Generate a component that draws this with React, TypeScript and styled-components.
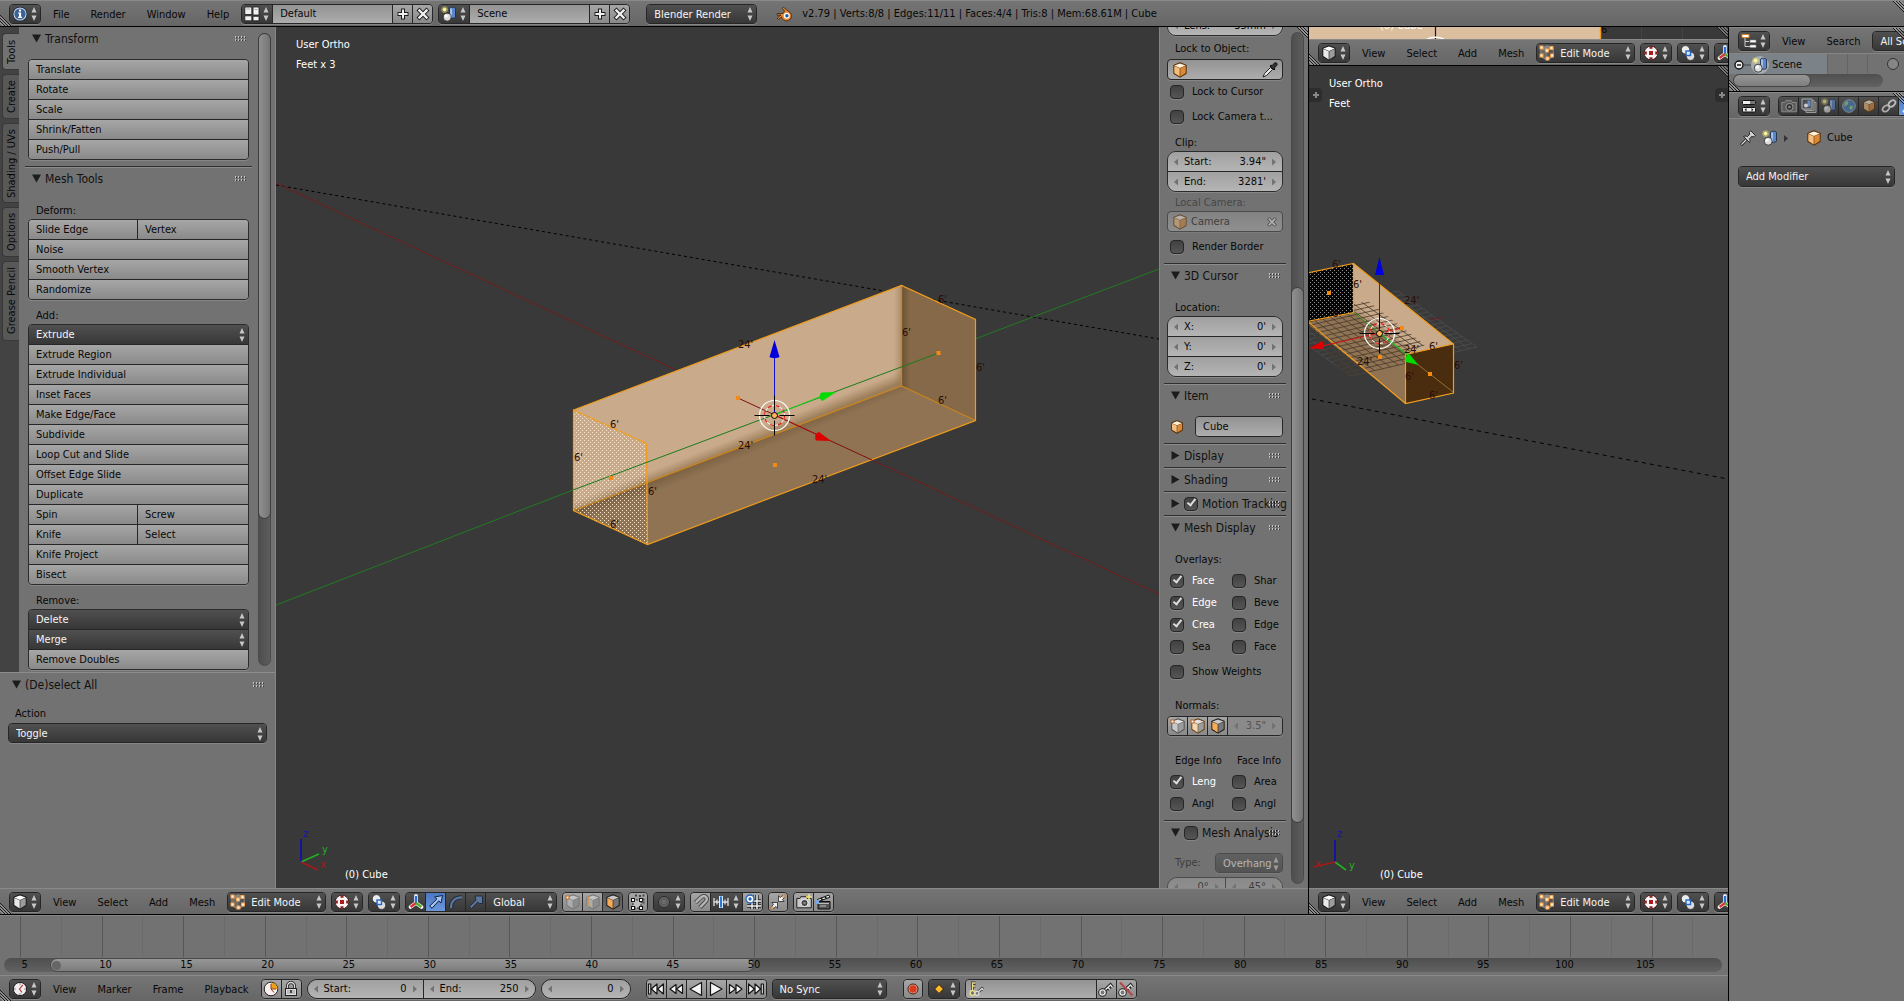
import React from 'react';
import styled, { createGlobalStyle, css } from 'styled-components';

const GlobalStyle = createGlobalStyle`
  *, *::before, *::after { box-sizing: border-box; }
  body {
    margin: 0;
    background: #727272;
    color: #080808;
    font: 11px/18px "DejaVu Sans Condensed", "DejaVu Sans", sans-serif;
    overflow: hidden;
  }
  button, input, select { font: inherit; color: inherit; margin: 0; padding: 0; border: 0; border-radius: 0; background: none; outline: none; }
  select { appearance: none; }
  svg { display: block; flex: none; }
`;

/* ---------- surfaces ---------- */

const light = css`background: linear-gradient(#a6a6a6, #8a8a8a);`;
const dark = css`background: linear-gradient(#505050, #373737); color: #f4f4f4;`;
const field = css`background: linear-gradient(#939393, #adadad);`;
const num = css`background: linear-gradient(#a0a0a0, #b5b5b5);`;

/* ---------- icons ---------- */

type IconProps = { s?: number; children?: React.ReactNode };
const Ico = ({ s = 16, children }: IconProps) => (
  <svg width={s} height={s} viewBox="0 0 16 16" aria-hidden="true">{children}</svg>
);

const InfoIcon = () => (
  <Ico><circle cx="8" cy="8" r="7.3" fill="#15243c" /><circle cx="8" cy="8" r="6.6" fill="#c9d8ec" /><circle cx="8" cy="8" r="5.6" fill="#3c6296" />
    <path d="M6.3 6.6h2.8v4.2h1v1.2H6v-1.2h1V7.8h-.7zM7 3.6h2v2H7z" fill="#fff" /></Ico>
);
const LayoutIcon = () => (
  <Ico><path d="M.8 1h7v7.500h-7zM9 1h6v8H9zM.8 9.800h7v5h-7zM9 10.300h6v4.500H9z" fill="#f0f0f0" stroke="#1a1a1a" strokeWidth=".8" /><path d="M2.500 3h3.500M10.500 3.500h3" stroke="#aaa" /></Ico>
);
const SceneIcon = () => (
  <Ico>
    <circle cx="3.6" cy="3.6" r="3.4" fill="#e8e070" opacity=".45" /><circle cx="3.6" cy="3.6" r="1.8" fill="#fbf6a0" />
    <path d="M8.5 2.6c0-1.8 6-1.8 6 0v8.3c0 1.8-6 1.8-6 0z" fill="#5b86cc" stroke="#15243c" strokeWidth=".8" /><path d="M10 2.5v8.5" stroke="#b9cff0" strokeWidth="1.6" />
    <circle cx="6.2" cy="11.2" r="4" fill="#dcdcdc" stroke="#222" strokeWidth=".8" /><circle cx="5.2" cy="10" r="1.6" fill="#fff" />
  </Ico>
);
const PlusIcon = () => (
  <Ico><path d="M8 2.5v11M2.5 8h11" stroke="#1c1c1c" strokeWidth="4" /><path d="M8 3.4v9.2M3.4 8h9.2" stroke="#f0f0f0" strokeWidth="2" /></Ico>
);
const CrossIcon = ({ s }: IconProps) => (
  <Ico s={s}><path d="M3 3l10 10M13 3L3 13" stroke="#1c1c1c" strokeWidth="4.2" /><path d="M3.6 3.6l8.8 8.8M12.4 3.6l-8.8 8.8" stroke="#f0f0f0" strokeWidth="2.2" /></Ico>
);
const BlenderIcon = () => (
  <Ico><path d="M6 2.2l1.4-.9 7 5.4a5 5 0 0 1-3.4 8.2c-3 .2-5-1.500-5.300-4L2.600 13.300 1 12.300l4-3.200H1.200V7.500H7L8.600 5z" fill="#e8832a" stroke="#3a2410" strokeWidth=".8" /><circle cx="10.700" cy="9.700" r="3" fill="#fff" /><circle cx="10.900" cy="9.700" r="1.700" fill="#28588f" /></Ico>
);
type CubeProps = IconProps & { t: string; l: string; r: string; e?: string };
const Cube = ({ s, t, l, r, e = '#3a3a3a', children }: CubeProps) => (
  <Ico s={s}>
    <path d="M8 1l6 2.300v8L8 15l-6-3.700v-8z" fill={e} stroke={e} strokeWidth="1.400" strokeLinejoin="round" />
    <path d="M8 1.400l5.700 2.200L8 6 2.300 3.600z" fill={t} /><path d="M2.300 3.900L7.700 6.200v8.200l-5.400-3.300z" fill={l} /><path d="M13.700 3.900L8.300 6.200v8.200l5.400-3.300z" fill={r} />
    {children}
  </Ico>
);
const ViewIcon = () => <Cube t="#ffffff" l="#e9e9e9" r="#9b9b9b" e="#1d1d1d" />;
const ObjectIcon = ({ s }: IconProps) => <Cube s={s} t="#fff1da" l="#f3bd7d" r="#dc8a38" e="#5b3208" />;
const dot = (x: number, y: number, c = '#f5a04a') => <rect key={`${x}-${y}`} x={x} y={y} width="3" height="3" fill="#fff4e0" stroke={c} strokeWidth="1" />;
const EditIcon = () => (
  <Cube t="#8a8478" l="#6e6a63" r="#555" e="#888">{[dot(1, 1), dot(11, 1.5), dot(6.500, 4), dot(1, 9), dot(7, 12), dot(11.500, 9)]}</Cube>
);
const VertexIcon = () => <Cube t="#c4c4c4" l="#adadad" r="#8c8c8c" e="#777">{dot(1, 2, '#b8692a')}</Cube>;
const EdgeIcon = () => <Cube t="#c4c4c4" l="#adadad" r="#8c8c8c" e="#777"><path d="M3 2.500v10" stroke="#c9955f" strokeWidth="2" /></Cube>;
const FaceIcon = () => <Cube t="#c9c9c9" l="#f8ac58" r="#777" e="#26201a" />;
const NVertexIcon = () => <Cube t="#e2e2e2" l="#c9c9c9" r="#9c9c9c" e="#555">{dot(1, 2, '#b8692a')}</Cube>;
const NSplitIcon = () => <Cube t="#e2e2e2" l="#f2d8ae" r="#9c9c9c" e="#6a431a">{dot(1, 2, '#b8692a')}</Cube>;
const ShadeIcon = () => (
  <Ico>
    <circle cx="8" cy="8" r="6.800" fill="#fdf6f6" stroke="#2a0808" strokeWidth=".8" />
    <path d="M6.500 1.600h3v2.200h-3zM6.500 12.200h3v2.200h-3zM1.600 6.500h2.200v3H1.600zM12.200 6.500h2.200v3h-2.200z" fill="#8c2020" />
    <path d="M6 6h4v4H6z" fill="#b01c1c" />
  </Ico>
);
const PivotIcon = () => (
  <Ico><circle cx="5.500" cy="4.800" r="4.200" fill="#ececec" stroke="#222" strokeWidth=".7" /><circle cx="10.500" cy="11.200" r="4.200" fill="#dcdcdc" stroke="#222" strokeWidth=".7" /><rect x="6" y="6" width="4.500" height="4.500" fill="#dceaff" stroke="#2767c2" strokeWidth="1.400" /></Ico>
);
const AxesIcon = () => (
  <Ico><path d="M8 9V2" stroke="#dfe9ff" strokeWidth="4" strokeLinecap="round" /><path d="M8 9l-5.500 4" stroke="#fff" strokeWidth="3.600" strokeLinecap="round" /><path d="M8 9l5.500 4" stroke="#fff" strokeWidth="3.600" strokeLinecap="round" /><path d="M8 9V2" stroke="#2b6fd6" strokeWidth="2.400" /><path d="M8 9l-5.500 4" stroke="#d63434" strokeWidth="2.400" /><path d="M8 9l5.500 4" stroke="#4fae28" strokeWidth="2.400" /></Ico>
);
const MoveIcon = () => <Ico><path d="M14.500 1.500L13 9l-2.300-2.200L4 14.300 1.700 12l7.200-7L6.600 3z" fill="#a5c4ef" stroke="#10213f" strokeLinejoin="round" /></Ico>;
const ArcIcon = () => <Ico><path d="M3 14C3 7 7 3.300 14 3.300" fill="none" stroke="#1c2c44" strokeWidth="4" /><path d="M3 14C3 7 7 3.300 14 3.300" fill="none" stroke="#5c7599" strokeWidth="2.200" /></Ico>;
const ScaleIcon = () => <Ico><path d="M7 2h7.500v7.500h-3L9.700 8.200 3.500 14.500 1.600 12.600 7.900 6.300z" fill="#5c7599" stroke="#1c2c44" /></Ico>;
const LimitIcon = () => (
  <Ico><path d="M3 6h8v8H3z" fill="#bdbdbd" stroke="#222" strokeDasharray="2 1" />{[[1, 4], [9, 4], [1, 12], [9, 12]].map(([x, y]) => <rect key={`${x}${y}`} x={x + .5} y={y + .5} width="3" height="3" fill="#fff" stroke="#111" />)}<path d="M5 1.500h2M12.500 1.500h2M12.500 8.500h2M9 2h2M13.500 4.500v2" stroke="#444" strokeWidth="2" /></Ico>
);
const PropIcon = () => <Ico><circle cx="8" cy="8" r="5.500" fill="#6b6b6b" stroke="#2a2a2a" /><circle cx="8" cy="8" r="3.200" fill="none" stroke="#505050" /></Ico>;
const MagnetIcon = () => <Ico><path d="M2.500 8.500L8.500 3c4-2.600 7 1.500 4 4.700L7 13.500" fill="none" stroke="#4a4a4a" strokeWidth="4.400" /><path d="M2.700 8.300L8.500 3c4-2.600 7 1.500 4 4.700L7.200 13.300" fill="none" stroke="#b5b5b5" strokeWidth="2.400" /></Ico>;
const SnapIcon = () => <Ico><path d="M1 4v8M4 5.500v5M12 5.500v5M15 4v8M1 8h14" stroke="#ddd" strokeWidth="1.300" /><path d="M8 2v12" stroke="#d7e8ff" strokeWidth="4" /><path d="M8 2.500v11" stroke="#2b78d6" strokeWidth="2" /></Ico>;
const GridSnapIcon = () => <Ico><path d="M7 1v14M12 1v14M2 7h14M2 12h14" stroke="#222" strokeWidth="3.400" /><path d="M7 1v14M12 1v14M2 7h14M2 12h14" stroke="#eee" strokeWidth="1.500" /><circle cx="5" cy="5" r="4" fill="#fff" stroke="#2868b4" strokeWidth="1.300" /><circle cx="5" cy="5" r="1.700" fill="#2868b4" /></Ico>;
const MergeIcon = () => <Ico><path d="M8.500 7.500V1.800l1.800 1.700L13 1l2 2-2.600 2.600 1.800 1.900z" fill="#f2f2f2" stroke="#222" strokeWidth=".8" /><path d="M7.500 8.500v5.700l-1.800-1.700L3 15l-2-2 2.600-2.600-1.800-1.900z" fill="#f2f2f2" stroke="#222" strokeWidth=".8" /><path d="M12.800 1h2.200v2.200h-2.200zM1 12.800h2.200V15H1z" fill="#f7d9b0" stroke="#b8692a" strokeWidth=".8" /></Ico>;
const CameraIcon = ({ dim }: { dim?: boolean }) => <Ico><path d="M.8 4.500h3l1-1.800h5.500l1 1.800h4v9.300H.8z" fill={dim ? '#5c5c5c' : '#c9c9c9'} stroke={dim ? '#8a8a8a' : '#222'} /><circle cx="8.500" cy="9" r="3.600" fill={dim ? '#333' : '#444'} stroke={dim ? '#999' : '#eee'} /><circle cx="8.500" cy="9" r="1.300" fill="#888" />{!dim && <path d="M13 0v6M10 3h6" stroke="#f4e27a" strokeWidth="1.600" />}</Ico>;
const ClapIcon = () => <Ico><path d="M2 7.500h12V15H2z" fill="#555" stroke="#111" /><path d="M1.500 5.500L13 1l.8 2.300L2.300 7.500z" fill="#eee" stroke="#111" /><path d="M5 4l1.500 2M9 2.600l1.500 2" stroke="#111" strokeWidth="1.500" /><path d="M3 9.500h10M4 12h6" stroke="#bbb" /><path d="M0 6h3v4H0z" fill="#77a8e0" /></Ico>;
const ClockIcon = () => <Ico><circle cx="8" cy="8" r="6.600" fill="#f4eeee" stroke="#222" /><path d="M10.800 3.800L7.500 8l2.500 3.500" fill="none" stroke="#b23b3b" strokeWidth="1.200" /><path d="M8 2.500v1M8 12.500v1M2.500 8h1M12.500 8h1" stroke="#333" /></Ico>;
const PieIcon = () => <Ico><circle cx="8" cy="8" r="6.800" fill="#f7f0ec" stroke="#222" /><path d="M8 8V1.500A6.500 6.500 0 0 1 14.500 8z" fill="#f0a018" /><path d="M8 8l3 3.500M8 8v-5M8 8h5" stroke="#8c3b1c" /></Ico>;
const LockIcon = () => <Ico><path d="M4.500 8V5a3.500 3.500 0 0 1 7 0v3" fill="none" stroke="#222" strokeWidth="3" /><path d="M4.500 8V5a3.500 3.500 0 0 1 7 0v3" fill="none" stroke="#ddd" strokeWidth="1.300" /><rect x="2.500" y="7.500" width="11" height="7" fill="#dedede" stroke="#222" /><path d="M4 10h8M4 12h8" stroke="#999" /><path d="M8 9v3" stroke="#222" strokeWidth="1.500" /></Ico>;
const Play = ({ d }: { d: string }) => <Ico><path d={d} fill="#f6f6f6" stroke="#141414" strokeWidth="1.200" strokeLinejoin="round" /></Ico>;
const PLAY = [
  ['Jump to first frame', 'M.6 3h2.200v10H.6zM9 3v10L3.400 8zM15.400 3v10L9.600 8z'],
  ['Previous keyframe', 'M8 3.500v9L2 8zM14.500 3.500v9L8.500 8z'],
  ['Play reversed', 'M13.500 1.500v13L2 8z'],
  ['Play', 'M2.500 1.500v13L14 8z'],
  ['Next keyframe', 'M1.500 3.500v9L7.500 8zM8 3.500v9L14 8z'],
  ['Jump to last frame', 'M.6 3v10L6.400 8zM7 3v10L12.600 8zM13.200 3h2.200v10h-2.200z'],
];
const RecordIcon = () => <Ico><circle cx="8" cy="8" r="5" fill="#e8b4a4" stroke="#4a1408" /><circle cx="8" cy="8" r="3.700" fill="#d83c1c" /></Ico>;
const KeyTypeIcon = () => <Ico><path d="M8 3.500L12.500 8 8 12.500 3.500 8z" fill="#fdb92e" stroke="#2a1c04" /></Ico>;
const KeyIcon = ({ off }: { off?: boolean }) => <Ico><path d="M5.500 10.500l7-6.500 2 2.500M10 6.500l2 2" fill="none" stroke="#222" strokeWidth="3.400" /><path d="M5.500 10.500l7-6.500 2 2.500M10 6.500l2 2" fill="none" stroke="#e6e6e6" strokeWidth="1.400" /><circle cx="4.500" cy="11.500" r="2.800" fill="#777" stroke="#222" strokeWidth="3" /><circle cx="4.500" cy="11.500" r="2.600" fill="#777" stroke="#e6e6e6" strokeWidth="1.400" />{off && <path d="M2 1.500l12.500 13" stroke="#b5484a" strokeWidth="2" />}</Ico>;
const KeySetIcon = () => <Ico><path d="M4.500 10V2h3M4.500 5h3" fill="none" stroke="#333" strokeWidth="3" /><path d="M4.500 10V2h3M4.500 5h3" fill="none" stroke="#e9dc8a" strokeWidth="1.400" /><circle cx="4.500" cy="12" r="2.400" fill="#777" stroke="#e9dc8a" strokeWidth="1.500" /><path d="M9 12l5-4.500 1.500 1.500" fill="none" stroke="#333" strokeWidth="3" /><path d="M9 12l5-4.500 1.500 1.500" fill="none" stroke="#ddd" strokeWidth="1.400" /><circle cx="9" cy="12.300" r="2" fill="#777" stroke="#ddd" strokeWidth="1.300" /></Ico>;
const TreeIcon = () => <Ico><path d="M4 4v9.500h5M4 8.500h4" fill="none" stroke="#ccc" /><path d="M1 1.500h7v3H1z" fill="#fff" stroke="#e08a2c" /><path d="M9 7h6v2.500H9zM9 12h6v2.500H9z" fill="#fff" stroke="#888" strokeWidth=".6" /></Ico>;
const PropsIcon = () => <Ico><rect x="1.500" y="2.500" width="13" height="4" rx="1" fill="#eee" stroke="#111" /><path d="M9 3h5v3H9z" fill="#777" /><rect x="1.500" y="9.500" width="13" height="4.500" rx="1" fill="#eee" stroke="#111" /><path d="M5.500 10l-2 1.800 2 1.700zM10.500 10l2 1.800-2 1.700z" fill="#222" /></Ico>;
const LayersIcon = () => <Ico><path d="M5 4.500h10v10H5z" fill="#555" stroke="#999" /><path d="M3 2.500h10v10H3z" fill="#555" stroke="#999" /><path d="M1 1h10v10H1z" fill="#4a4f58" stroke="#aaa" /><path d="M6.500 2.500h3v6h-3z" fill="#6a87b8" /><circle cx="5" cy="7.500" r="2" fill="#ccc" /></Ico>;
const WorldIcon = () => <Ico><circle cx="8" cy="8" r="6.300" fill="#46688f" stroke="#7d8b9b" /><path d="M4 4c3-2 4 0 3 2s-3 1-4 3M9 8c3-1 4 1 2 3s-3-1-2-3z" fill="#7d9a6c" /></Ico>;
const LinkIcon = () => <Ico><ellipse cx="5" cy="10.500" rx="3.800" ry="2.600" transform="rotate(-40 5 10.500)" fill="none" stroke="#aaa" strokeWidth="1.800" /><ellipse cx="11" cy="5.500" rx="3.800" ry="2.600" transform="rotate(-40 11 5.500)" fill="none" stroke="#bbb" strokeWidth="1.800" /></Ico>;
const WrenchIcon = () => <Ico><path d="M2 14L9 7a3.500 3.500 0 0 1 4.500-4.500L11 5l1 1.500L14.500 5" fill="none" stroke="#e8f0ff" strokeWidth="2" /></Ico>;
const PinIcon = () => <Ico><path d="M1 15l5-5" stroke="#222" strokeWidth="3" /><path d="M1.400 14.600L6 10" stroke="#ddd" strokeWidth="1.300" /><path d="M3.500 6.500c2-.8 3-.3 3.800.3l2.500-2.700-.8-1.600 1.800-1.700 4.500 4.500-1.700 1.800-1.600-.8-2.700 2.500c.6.800 1.100 1.800.3 3.800z" fill="#cfcfcf" stroke="#2a2a2a" /></Ico>;
const DropperIcon = () => <Ico><path d="M1 15l1.500-3.500 6-6 2 2-6 6z" fill="#e8e8e8" stroke="#222" /><path d="M8 4l1-1 1 .7L12.500 1c2-1 3.300.8 2.300 2.300L12.300 6l.7 1-1 1z" fill="#333" stroke="#111" /></Ico>;

const Updown = () => <svg width="8" height="14" viewBox="0 0 8 14" aria-hidden="true"><path d="M4 0l2.500 5.500h-5zM4 14L1.500 8.500h5z" fill="#c6c6c6" /></svg>;
const Side = ({ right }: { right?: boolean }) => <svg width="6" height="8" viewBox="0 0 6 8" aria-hidden="true"><path d={right ? 'M1 .5v7L5 4z' : 'M5 .5v7L1 4z'} fill="#727272" /></svg>;
const Tri = ({ open }: { open?: boolean }) => <svg width="9" height="9" viewBox="0 0 9 9" aria-hidden="true"><path d={open ? 'M0 .5h9l-4.500 8z' : 'M.5 0v9l8-4.500z'} fill="#1c1c1c" /></svg>;
const Grip = () => (
  <svg width="11" height="5" viewBox="0 0 11 5" aria-hidden="true">{[0, 3, 6, 9].map(x => <g key={x}><path d={`M${x + .5} 0v2M${x + .5} 3v2`} stroke="#c4c4c4" /><path d={`M${x + 1.5} 1v1M${x + 1.5} 4v1`} stroke="#333" /></g>)}</svg>
);
const CornerBox = styled.svg<{ $at: 'bl' | 'tr' }>`
  position: absolute; z-index: 3; pointer-events: none;
  ${p => (p.$at === 'bl' ? 'left: 0; bottom: 0;' : 'right: 0; top: 0;')}
`;
const Corner = ({ at }: { at: 'bl' | 'tr' }) => (
  <CornerBox $at={at} width="12" height="12" viewBox="0 0 12 12" aria-hidden="true">
    {[0, 3, 6].map(i => at === 'bl'
      ? <g key={i}><path d={`M0 ${i + 1}L${11 - i} 12`} stroke="#1a1a1a" /><path d={`M0 ${i + 2.500}L${9.500 - i} 12`} stroke="#b4b4b4" /></g>
      : <g key={i}><path d={`M${i + 1} 0L12 ${11 - i}`} stroke="#1a1a1a" /><path d={`M${i + 2.500} 0L12 ${9.500 - i}`} stroke="#b4b4b4" /></g>)}
  </CornerBox>
);

/* ---------- controls ---------- */

const Header = styled.div<{ $line?: boolean }>`
  position: relative; flex: none; display: flex; align-items: center; gap: 5px;
  height: ${p => (p.$line ? 27 : 26)}px; padding: 0 0 0 9px; overflow: hidden; white-space: nowrap;
  background: linear-gradient(#757575, #666);
  border-top: 1px solid #8a8a8a;
  ${p => p.$line && 'border-bottom: 1px solid #000;'}
`;
const Menus = styled.nav` display: flex; gap: 1px; margin: 0 -3px 0 -3px; `;
const MenuButton = styled.button` padding: 1px 10px 0; height: 20px; line-height: 19px; `;
const Spacer = styled.span<{ $w: number }>` flex: none; width: ${p => p.$w}px; `;

const Group = styled.div<{ $round?: boolean; $flex?: boolean }>`
  display: flex; flex: none; height: 20px; overflow: hidden;
  border: 1px solid #262626; border-radius: ${p => (p.$round ? 10 : 4)}px;
  box-shadow: 0 1px 0 #868686;
  ${p => p.$flex && 'flex: 1; min-width: 0;'}
  > * + * { border-left: 1px solid #262626; }
`;
const IconButton = styled.button<{ $tone?: 'dark' | 'blue' | 'pressed' }>`
  flex: none; width: 20px; display: grid; place-items: center;
  &:first-child { width: 19px; }
  &:only-child { width: 18px; }
  ${light}
  ${p => p.$tone === 'dark' && dark}
  ${p => p.$tone === 'blue' && 'background: linear-gradient(#4a78c2, #6b97dc);'}
  ${p => p.$tone === 'pressed' && 'background: linear-gradient(#595959, #6c6c6c);'}
`;
const DropBox = styled.div<{ $w?: number }>`
  display: grid; align-items: center; flex: none; min-width: 0;
  width: ${p => (p.$w ? `${p.$w}px` : '100%')};
  ${dark}
  > * { grid-area: 1 / 1; }
  > svg { pointer-events: none; justify-self: start; margin-left: 2px; }
  > svg:last-child { justify-self: end; margin: 0 2px 0 0; }
`;
const Select = styled.select<{ $icon?: boolean }>` width: 100%; height: 100%; padding: 1px 0 0 ${p => (p.$icon ? 23 : 7)}px; `;
type DropProps = { label: string; text?: string; icon?: React.ReactNode; w?: number };
const Drop = ({ label, text, icon, w }: DropProps) => (
  <DropBox $w={w}>
    <Select aria-label={label} $icon={!!icon}><option>{text ?? ''}</option></Select>
    {icon}
    <Updown />
  </DropBox>
);
const IconDrop = ({ label, icon }: DropProps) => <Group><Drop label={label} icon={icon} w={30} /></Group>;

const TextInput = styled.input<{ $w?: number }>` ${field} width: ${p => (p.$w ? `${p.$w}px` : '100%')}; min-width: 0; padding: 1px 0 0 7px; `;

const NumBox = styled.label<{ $w?: number }>`
  display: flex; align-items: center; gap: 5px; padding: 0 5px; min-width: 0; height: 100%;
  width: ${p => (p.$w ? `${p.$w}px` : '100%')};
  ${num}
`;
const NumInput = styled.input` flex: 1; width: 0; min-width: 0; height: 18px; text-align: right; `;
const Num = ({ label, value, w, name }: { label?: string; value: string; w?: number; name?: string }) => (
  <NumBox $w={w}><Side />{label}<NumInput defaultValue={value} aria-label={name} /><Side right /></NumBox>
);

const Column = styled.div<{ $round?: boolean; $mt?: number }>`
  display: flex; flex-direction: column; overflow: hidden; flex: none;
  margin-top: ${p => p.$mt ?? 0}px;
  border: 1px solid #2b2b2b; border-radius: ${p => (p.$round ? 9 : 4)}px;
  box-shadow: 0 1px 0 #868686;
  > * { height: 19px; flex: none; }
  > * + * { height: 20px; border-top: 1px solid #262626; }
`;
const ToolButton = styled.button` ${light} text-align: left; padding: 1px 0 0 7px; white-space: nowrap; `;
const Pair = styled.div`
  display: grid; grid-template-columns: 108px 1fr;
  ${ToolButton} + ${ToolButton} { border-left: 1px solid #262626; }
`;

const Check = styled.input`
  appearance: none; flex: none; width: 14px; height: 14px; border-radius: 4px; position: relative;
  border: 1px solid #262626; background: linear-gradient(#414141, #555);
  box-shadow: 0 1px 0 #868686;
  &:checked::after {
    content: ''; position: absolute; left: 4px; top: -1px; width: 5px; height: 9px;
    border: solid #dcdcdc; border-width: 0 2px 2px 0; transform: rotate(38deg);
  }
`;
const CheckLabel = styled.label<{ $mt?: number; $tall?: boolean; $lit?: boolean }>`
  display: flex; align-items: center; gap: 8px; padding-left: 3px; white-space: nowrap;
  height: ${p => (p.$tall ? 22 : 20)}px; margin-top: ${p => p.$mt ?? 0}px;
  color: ${p => (p.$lit ? '#fff' : 'inherit')};
`;
const CheckRow = ({ text, on, mt, tall }: { text: string; on?: boolean; mt?: number; tall?: boolean }) => (
  <CheckLabel $mt={mt} $tall={tall} $lit={on}><Check type="checkbox" defaultChecked={on} />{text}</CheckLabel>
);
const Checks = styled.div` display: grid; grid-template-columns: 62px 54px; margin-top: 2px; `;

const Caption = styled.div<{ $mt?: number; $off?: boolean }>`
  height: 18px; padding: 1px 0 0 8px; line-height: 17px; white-space: nowrap;
  margin-top: ${p => p.$mt ?? 6}px; ${p => p.$off && 'color: #474747;'}
`;
const Captions = styled.div` display: grid; grid-template-columns: 62px 54px; margin-top: 15px; `;

const Section = styled.section<{ $first?: boolean; $pb?: number }>`
  padding: 0 3px ${p => p.$pb ?? 6}px;
  ${p => !p.$first && 'border-top: 1px solid #2f2f2f; box-shadow: inset 0 1px 0 #8d8d8d;'}
`;
const TitleRow = styled.h2`
  display: flex; align-items: center; gap: 4px; height: 23px; margin: 0; padding: 0 3px 0 4px;
  font-size: 12px; font-weight: normal; color: #111; white-space: nowrap;
  > svg:last-child { margin-left: auto; }
`;
const TitleText = styled.span` flex: 1; width: 0; `;
const Title = ({ text, open, check, on }: { text: string; open?: boolean; check?: boolean; on?: boolean }) => (
  <TitleRow><Tri open={open} />{check && <Check type="checkbox" defaultChecked={on} aria-label={text} />}<TitleText>{text}</TitleText><Grip /></TitleRow>
);

const Track = styled.div` flex: none; width: 13px; border-radius: 7px; background: linear-gradient(90deg, #4e4e4e, #5d5d5d); border: 1px solid #4a4a4a; `;
const Thumb = styled.div<{ $top: number; $size: number }>`
  height: ${p => p.$size}%; margin: ${p => p.$top}px -1px 0; border-radius: 7px;
  border: 1px solid #3d3d3d; background: linear-gradient(90deg, #909090, #757575);
`;

/* ---------- layout ---------- */

const Page = styled.div` display: flex; flex-direction: column; height: 100vh; `;
const Row = styled.div` flex: 1; display: flex; min-height: 0; min-width: 0; `;
const Col = styled.div` flex: 1; display: flex; flex-direction: column; min-width: 0; min-height: 0; `;

const ToolShelf = styled.aside` flex: none; width: 276px; display: flex; flex-direction: column; background: #727272; border-right: 1px solid #858585; `;
const ShelfTop = styled.div` flex: 1; display: flex; min-height: 0; overflow: hidden; ${Track} { margin: 6px 0; } `;
const TabStrip = styled.div` flex: none; width: 19px; background: #434343; padding: 6px 0 0 2px; display: flex; flex-direction: column; gap: 4px; `;
const ShelfTab = styled.button<{ $active?: boolean; $h: number }>`
  height: ${p => p.$h}px; width: 17px; line-height: 17px; text-align: center; white-space: nowrap;
  writing-mode: vertical-rl; transform: rotate(180deg);
  border: 1px solid #383838; border-left: 0; border-radius: 0 4px 4px 0;
  background: ${p => (p.$active ? '#727272' : '#585858')};
`;
const ShelfBody = styled.div` flex: 1; padding: 0 6px; min-width: 0; `;
const ShelfCaption = styled.div` height: 21px; padding: 4px 0 0 8px; margin-top: 3px; line-height: 17px; `;
const Operator = styled.div` flex: none; height: 216px; border-top: 1px solid #8c8c8c; padding: 0 8px; `;
const OperatorCaption = styled.label` display: flex; flex-direction: column; padding-top: 9px; `;
const OperatorLabel = styled.span` padding-left: 7px; `;

const Viewport = styled.main` position: relative; flex: 1; min-width: 0; min-height: 0; background: #393939; overflow: hidden; `;
const Scene = styled.svg` position: absolute; inset: 0; width: 100%; height: 100%; `;
const Hud = styled.div` position: absolute; left: 20px; top: 8px; line-height: 20px; color: #fff; `;
const ObjectName = styled.div<{ $x: number }>` position: absolute; left: ${p => p.$x}px; bottom: 4px; color: #fff; `;
const Expander = styled.button<{ $right?: boolean }>`
  position: absolute; top: 22px; ${p => (p.$right ? 'right: 0; border-radius: 4px 0 0 4px;' : 'left: 0; border-radius: 0 4px 4px 0;')}
  width: 13px; height: 14px; background: #2d2d2d; display: grid; place-items: center;
  &::before { content: ''; grid-area: 1/1; width: 6px; height: 2px; background: #898989; }
  &::after { content: ''; grid-area: 1/1; width: 2px; height: 6px; background: #898989; }
`;

const Properties = styled.aside` position: relative; flex: none; width: 149px; display: flex; overflow: hidden; background: #727272; border-left: 1px solid #858585; ${Track} { margin: 5px 4px 4px 0; } `;
const PropScroll = styled.div` flex: 1; min-width: 0; padding: 0 5px 0 4px; overflow: hidden; `;
const Lens = styled.div` margin: -12px 0 0; padding: 0 3px 6px; `;
const Inline = styled.div<{ $mt: number; $off?: boolean }>` display: flex; align-items: center; margin-top: ${p => p.$mt}px; opacity: ${p => (p.$off ? 0.5 : 1)}; `;
const ObjectField = styled.label<{ $mt: number; $off?: boolean }>`
  display: flex; align-items: center; gap: 3px; height: 21px; padding: 0 4px; margin-top: ${p => p.$mt}px;
  border: 1px solid #262626; border-radius: 4px; box-shadow: 0 1px 0 #868686; ${field}
  opacity: ${p => (p.$off ? 0.5 : 1)};
  input { flex: 1; width: 0; min-width: 0; }
`;
const NameField = styled.span` flex: 1; display: flex; height: 21px; margin-left: 11px; border: 1px solid #262626; border-radius: 4px; overflow: hidden; `;
const IconCell = styled.span` padding-left: 3px; `;
const TypeCaption = styled.span` flex: none; width: 48px; padding-left: 8px; `;

const SideViews = styled.div` flex: none; width: 420px; display: flex; flex-direction: column; border-left: 1px solid #000; `;
const Sliver = styled.div` flex: none; position: relative; height: 12px; overflow: hidden; background: #393939; `;

const Timeline = styled.section` flex: none; display: flex; flex-direction: column; height: 86px; overflow: hidden; background: #727272; border-top: 1px solid #858585; `;
const Ticks = styled.div` flex: none; display: flex; height: 41px; margin: 0 -5px 0 20px; `;
const Tick = styled.span` flex: 1; border-left: 1px solid #575757; background: linear-gradient(#6a6a6a, #6a6a6a) 50% 0 / 1px 100% no-repeat; `;
const Ruler = styled.div` flex: none; display: grid; margin-top: 1px; height: 14px; > * { grid-area: 1/1; } `;
const RulerTrack = styled.div` margin: 0 6px 0 4px; border-radius: 7px; background: linear-gradient(#4f4f4f, #626262); `;
const RulerRange = styled.div` height: 100%; width: 41%; margin-left: 46px; border-radius: 7px; background: linear-gradient(#979797, #7c7c7c); border: 1px solid #4a4a4a; `;
const Handle = styled.div` width: 9px; height: 9px; border-radius: 50%; margin: 2px 0 0 1px; background: #666; `;
const RulerLabels = styled.div` display: flex; margin: 0 42px 0 -16px; line-height: 14px; > span { flex: 1; text-align: center; } `;

const Sidebar = styled.aside` flex: none; width: 176px; display: flex; flex-direction: column; border-left: 1px solid #000; overflow: hidden; background: #727272; `;
const Outliner = styled.div` position: relative; flex: none; height: 39px; border-bottom: 1px solid #000; `;
const TreeRow = styled.div` display: flex; align-items: center; height: 21px; border-top: 1px solid #858585; `;
const TreeItem = styled.div` display: flex; align-items: center; gap: 4px; flex: none; width: 98px; height: 20px; padding: 1px 0 0 5px; background: #7c8388; `;
const TreeCell = styled.span` width: 20px; height: 20px; border-left: 1px solid #646464; flex: none; `;
const Radio = styled.input` appearance: none; width: 12px; height: 12px; border: 1px solid #333; border-radius: 50%; margin-left: auto; margin-right: 5px; background: #858585; `;
const HTrack = styled.div` height: 13px; margin: 0 21px 0 4px; border-radius: 7px; background: linear-gradient(#4f4f4f, #626262); `;
const HThumb = styled.div` height: 100%; width: 52%; border: 1px solid #444; border-radius: 7px; background: linear-gradient(#969696, #7e7e7e); `;
const IconHalo = styled.span` display: grid; place-items: center; flex: none; width: 18px; height: 18px; margin: 0 -1px 0 -11px; border-radius: 50%; background: #a5abaf; `;
const Crumbs = styled.div` display: flex; align-items: center; gap: 6px; height: 39px; padding: 0 11px; border-top: 1px solid #858585; `;
const Modifier = styled.div` padding: 9px 9px 0 9px; ${Group} { height: 21px; } `;
const TimelineBar = styled(Header)` height: 26px; margin-top: auto; `;
const KeySet = styled.label` display: flex; align-items: center; width: 130px; padding-left: 2px; ${field} input { flex: 1; width: 0; min-width: 0; } `;
const PropTabs = styled(Group)` margin-left: 3px; `;
const Faded = styled.span` opacity: 0.6; `;
const CrumbObject = styled.span` display: flex; align-items: center; gap: 5px; margin-left: 11px; `;
const FadedNum = styled.label` display: flex; align-items: center; flex: 1; min-width: 0; padding: 0 5px; gap: 5px; color: #555; background: #8a8a8a; `;
const Stats = styled.span` margin-left: 5px; padding-top: 1px; `;
const Render = styled.span` display: flex; margin-left: 14px; `;

/* ---------- scenes ---------- */

type Mark = [string, number, number];
const Dims = ({ marks }: { marks: Mark[] }) => (
  <g fill="#2a0d04">{marks.map(([t, x, y]) => <text key={`${x},${y}`} x={x} y={y} fontSize="11">{t}</text>)}</g>
);
const Cursor = ({ x, y }: { x: number; y: number }) => (
  <g transform={`translate(${x} ${y})`} fill="none">
    <circle r="15" stroke="#fff" strokeWidth="1.200" />
    <circle r="10" stroke="#fff" strokeWidth="1" /><circle r="10" stroke="#e01818" strokeWidth="1.200" strokeDasharray="4 4" />
    <path d="M-20 0h15M5 0h15M0-20V-5M0 5v15" stroke="#000" />
    <circle r="3" fill="#ffb45c" stroke="#000" />
  </g>
);
const Dots = ({ at }: { at: [number, number][] }) => <g fill="#f58a12">{at.map(([x, y]) => <rect key={`${x}`} x={x - 2} y={y - 2} width="4" height="4" />)}</g>;

const MainScene = () => (
  <Scene viewBox="276 27 883 861" preserveAspectRatio="xMidYMid slice" role="img" aria-label="Cube in perspective">
    <defs>
      <pattern id="stipple" width="4" height="4" patternUnits="userSpaceOnUse"><path d="M0 0h1v1H0zM2 2h1v1H2z" fill="#f3e3cc" /></pattern>
      <linearGradient id="wall" gradientUnits="userSpaceOnUse" x1="737" y1="448" x2="733" y2="438"><stop offset="0" stopColor="#8a6c46" stopOpacity=".7" /><stop offset="1" stopColor="#94764f" stopOpacity="0" /></linearGradient>
      <linearGradient id="wallSide" gradientUnits="userSpaceOnUse" x1="901" y1="0" x2="894" y2="0"><stop offset="0" stopColor="#94764f" stopOpacity=".5" /><stop offset="1" stopColor="#94764f" stopOpacity="0" /></linearGradient>
      <linearGradient id="floor" gradientUnits="userSpaceOnUse" x1="737" y1="448" x2="741" y2="458"><stop offset="0" stopColor="#5f482c" stopOpacity=".4" /><stop offset="1" stopColor="#5f482c" stopOpacity="0" /></linearGradient>
      <linearGradient id="endSide" gradientUnits="userSpaceOnUse" x1="902" y1="0" x2="910" y2="0"><stop offset="0" stopColor="#513c22" stopOpacity=".5" /><stop offset="1" stopColor="#513c22" stopOpacity="0" /></linearGradient>
    </defs>
    <path d="M276 185L1159 339" stroke="#000" strokeDasharray="3 3" />
    <path d="M276 183L676 370M872 460L1159 594" stroke="#751c1c" />
    <path d="M975 339L1159 269M276 605L573 490" stroke="#237a23" />
    <path d="M573.500 410L901.500 285.500V386L573.500 510.500z" fill="#c9ab8c" />
    <path d="M573.500 410L901.500 285.500V386L573.500 510.500z" fill="url(#wall)" /><path d="M573.500 410L901.500 285.500V386L573.500 510.500z" fill="url(#wallSide)" />
    <path d="M901.500 285.500L975.500 319.500V420.500L901.500 386z" fill="#856948" /><path d="M901.500 285.500L975.500 319.500V420.500L901.500 386z" fill="url(#endSide)" />
    <path d="M573.500 510.500L901.500 386 975.500 420.500 647.500 544.500z" fill="#8f7353" /><path d="M573.500 510.500L901.500 386 975.500 420.500 647.500 544.500z" fill="url(#floor)" />
    <path d="M573.500 410L646.500 443.500 647.500 544.500 573.500 510.500z" fill="url(#stipple)" />
    <path d="M573.500 510.500L901.500 386 975.500 420.500M901.500 386V285.500" fill="none" stroke="#c88420" strokeWidth="1.300" />
    <path d="M573.500 410L901.500 285.500 975.500 319.500V420.500L647.500 544.500 573.500 510.500z" fill="none" stroke="#f09c1c" strokeWidth="1.200" />
    <path d="M573.500 410L646.500 443.500" stroke="#f09c1c" strokeWidth="1.500" strokeDasharray="4 1" /><path d="M646.500 443.500L647.500 544.500" stroke="#f09c1c" strokeWidth="1.300" />
    <path d="M573 490L938.500 353" stroke="#1d7a1d" /><path d="M738 398L872 460" stroke="#7d1010" />
    <Dots at={[[738, 398], [938.500, 353], [775, 465], [611, 478]]} />
    <path d="M774.500 415V357" stroke="#1010d8" /><path d="M774.500 340l5 17c-2 1.500-8 1.500-10 0z" fill="#0000dc" />
    <path d="M774.500 415L822 396" stroke="#18d818" /><path d="M836 392l-13.500 9c-3-1-4-6-1-8.500z" fill="#00dc00" />
    <path d="M774.500 415L818 435" stroke="#b01010" /><path d="M831 441l-15-.5c-2-3-.5-7.500 3-8.500z" fill="#dc0000" />
    <Cursor x={774.500} y={415.500} />
    <Dims marks={[["6'", 938, 303], ["6'", 902, 336], ["6'", 976, 371], ["6'", 938, 404], ["24'", 738, 348], ["24'", 738, 449], ["24'", 812, 483], ["6'", 610, 428], ["6'", 574, 461], ["6'", 648, 495], ["6'", 610, 528]]} />
    <path d="M301 862V839" stroke="#0c0cb4" strokeWidth="1.600" /><path d="M301 862L319 854" stroke="#22b022" strokeWidth="1.600" /><path d="M301 862L318 870" stroke="#a81818" strokeWidth="1.600" />
    <text x="303" y="837" fontSize="11" fill="#1414b4">z</text><text x="322" y="853" fontSize="11" fill="#22b022">y</text><text x="320" y="868" fontSize="11" fill="#a81818">x</text>
  </Scene>
);

const steps = Array.from({ length: 17 }, (_, i) => i / 16);
const gridPath = steps.map(k => `M${1398 - 126 * k} ${291 + 29 * k}l79 56M${1398 + 79 * k} ${291 + 56 * k}l-126 29`).join('');
const SideScene = () => (
  <Scene viewBox="1309 66 419 822" preserveAspectRatio="xMidYMid slice" role="img" aria-label="Cube from the other side">
    <defs>
      <pattern id="holes" width="4" height="4" patternUnits="userSpaceOnUse"><path d="M0 0h1v1H0zM2 2h1v1H2z" fill="#8d8d8d" /></pattern>
      <clipPath id="inside"><path d="M1300 314L1368 301 1425 345 1405.500 354V366L1345 378z" /></clipPath>
    </defs>
    <path d={gridPath} stroke="#4e4e4e" fill="none" strokeWidth=".8" />
    <path d="M1312 399L1728 479" stroke="#000" strokeDasharray="4 4" />
    <path d="M1430 320L1444 317" stroke="#6b1f1f" />
    <path d="M1353.500 263.500L1453.500 344V393L1353.500 312.500z" fill="#c9ab8c" />
    <path d="M1300 324L1353.500 312.500 1453.500 393 1405.500 403.500 1300 318z" fill="#8f7353" />
    <path d="M1353.500 306L1453.500 380V393L1353.500 312.500z" fill="#a98b69" opacity=".6" />
    <path d={gridPath} stroke="#463a2c" fill="none" strokeWidth=".8" clipPath="url(#inside)" />
    <path d="M1300 274L1353.500 263.500V312.500L1300 324z" fill="#060606" /><path d="M1300 274L1353.500 263.500V312.500L1300 324z" fill="url(#holes)" />
    <path d="M1353.500 312.500L1410 358" stroke="#2c8a1e" />
    <path d="M1405.500 354.500L1453.500 344V393L1405.500 403.500z" fill="#4a2c0e" />
    <path d="M1412 360L1453 392" stroke="#95702c" />
    <path d="M1300 274.500L1353.500 263.500V312.500L1300 323M1353.500 263.500L1453.500 344V393L1405.500 403.500 1300 315M1405.500 403.500V354.500L1453.500 344" fill="none" stroke="#f09c1c" strokeWidth="1.200" />
    <path d="M1379.500 333L1322 346M1385 332L1402 328" stroke="#d81414" /><path d="M1309 348.500l13-7.500c2 2 2 6 .5 8z" fill="#e00000" />
    <path d="M1379.500 333V275" stroke="#2020d8" /><path d="M1379.500 257l4.500 18h-9z" fill="#0000dc" />
    <path d="M1379.500 333L1408 355" stroke="#18c818" /><path d="M1418.500 365l-12.500-3c-1.500-3 0-7 3-8.500z" fill="#00dc00" />
    <Dots at={[[1329, 293], [1402, 328], [1380, 357], [1430, 374]]} />
    <Cursor x={1379.500} y={333.500} />
    <Dims marks={[["6'", 1332, 268], ["6'", 1353, 288], ["24'", 1404, 304], ["6'", 1332, 317], ["24'", 1404, 353], ["6'", 1429, 350], ["24'", 1357, 365], ["6'", 1454, 369], ["6'", 1405, 380], ["6'", 1429, 399]]} />
    <path d="M1335 862V840" stroke="#0c0cb4" strokeWidth="1.600" /><path d="M1335 862L1346 870" stroke="#22b022" strokeWidth="1.600" /><path d="M1335 862L1313 867" stroke="#a81818" strokeWidth="1.600" />
    <text x="1337" y="837" fontSize="11" fill="#1414b4">z</text><text x="1349" y="869" fontSize="11" fill="#22b022">y</text><text x="1315" y="867" fontSize="11" fill="#a81818">x</text>
  </Scene>
);

const SliverScene = () => (
  <Scene viewBox="1309 27 419 12" preserveAspectRatio="xMinYMid slice" role="img" aria-label="Cube close up">
    <path d="M1641.500 27v12M1682.500 27v12" stroke="#444" />
    <path d="M1309 27h291v12h-291z" fill="#dcbf9f" /><path d="M1600.500 27v12" stroke="#f09c1c" strokeWidth="1.400" />
    <path d="M1435.500 27v12" stroke="#101060" strokeWidth="1.200" /><path d="M1427 39q8.500-3.500 17 0" fill="none" stroke="#fff" strokeWidth="1.300" />
    <text x="1380" y="29" fontSize="11" fill="#fff">(0) Cube</text><text x="1601" y="33" fontSize="11" fill="#140702">6'</text>
  </Scene>
);

/* ---------- headers ---------- */

const ViewHeader = ({ full, line }: { full?: boolean; line?: boolean }) => (
  <Header $line={line}>
    <Corner at="bl" />
    <IconDrop label="Editor type" icon={<ViewIcon />} />
    <Menus>{['View', 'Select', 'Add', 'Mesh'].map(m => <MenuButton key={m}>{m}</MenuButton>)}</Menus>
    <Group><Drop label="Mode" text="Edit Mode" icon={<EditIcon />} w={97} /></Group>
    <IconDrop label="Viewport shading" icon={<ShadeIcon />} />
    <IconDrop label="Pivot point" icon={<PivotIcon />} />
    <Group>
      <IconButton $tone="dark" aria-label="Manipulator"><AxesIcon /></IconButton>
      <IconButton $tone="blue" aria-label="Translate manipulator"><MoveIcon /></IconButton>
      <IconButton $tone="dark" aria-label="Rotate manipulator"><ArcIcon /></IconButton>
      <IconButton $tone="dark" aria-label="Scale manipulator"><ScaleIcon /></IconButton>
      <Drop label="Orientation" text="Global" w={71} />
    </Group>
    {full && <>
      <Group>
        <IconButton aria-label="Vertex select"><VertexIcon /></IconButton>
        <IconButton aria-label="Edge select"><EdgeIcon /></IconButton>
        <IconButton $tone="pressed" aria-label="Face select"><FaceIcon /></IconButton>
      </Group>
      <Group><IconButton aria-label="Limit selection to visible"><LimitIcon /></IconButton></Group>
      <IconDrop label="Proportional editing" icon={<PropIcon />} />
      <Group>
        <IconButton aria-label="Snap"><MagnetIcon /></IconButton>
        <Drop label="Snap element" icon={<SnapIcon />} w={32} />
        <IconButton aria-label="Snap target"><GridSnapIcon /></IconButton>
      </Group>
      <Group><IconButton aria-label="Auto merge"><MergeIcon /></IconButton></Group>
      <Group>
        <IconButton aria-label="Render image"><CameraIcon /></IconButton>
        <IconButton aria-label="Render animation"><ClapIcon /></IconButton>
      </Group>
    </>}
  </Header>
);

const DataField = ({ label, icon, value }: { label: string; icon: React.ReactNode; value: string }) => (
  <Group>
    <Drop label={`Browse ${label}`} icon={icon} w={30} />
    <TextInput $w={120} defaultValue={value} aria-label={label} />
    <IconButton aria-label={`Add ${label}`}><PlusIcon /></IconButton>
    <IconButton aria-label={`Delete ${label}`}><CrossIcon /></IconButton>
  </Group>
);

const TABS: [string, number][] = [['Tools', 37], ['Create', 45], ['Shading / UVs', 80], ['Options', 50], ['Grease Pencil', 80]];

export default function App() {
  return (
    <Page>
      <GlobalStyle />
      <Header $line>
        <Corner at="bl" />
        <IconDrop label="Editor type" icon={<InfoIcon />} />
        <Menus>{['File', 'Render', 'Window', 'Help'].map(m => <MenuButton key={m}>{m}</MenuButton>)}</Menus>
        <DataField label="screen layout" icon={<LayoutIcon />} value="Default" />
        <DataField label="scene" icon={<SceneIcon />} value="Scene" />
        <Spacer $w={6} />
        <Group><Drop label="Render engine" text="Blender Render" w={109} /></Group>
        <Render><BlenderIcon /></Render>
        <Stats>v2.79 | Verts:8/8 | Edges:11/11 | Faces:4/4 | Tris:8 | Mem:68.61M | Cube</Stats>
        <Corner at="tr" />
      </Header>

      <Row>
        <Col>
          <Row>
            <Col>
              <Row>
                <ToolShelf>
                  <ShelfTop>
                    <TabStrip>{TABS.map(([t, h], i) => <ShelfTab key={t} $h={h} $active={i === 0}>{t}</ShelfTab>)}</TabStrip>
                    <ShelfBody>
                      <Section $first>
                        <Title text="Transform" open />
                        <Column $mt={9}>{['Translate', 'Rotate', 'Scale', 'Shrink/Fatten', 'Push/Pull'].map(t => <ToolButton key={t}>{t}</ToolButton>)}</Column>
                      </Section>
                      <Section>
                        <Title text="Mesh Tools" open />
                        <Caption $mt={11}>Deform:</Caption>
                        <Column>
                          <Pair><ToolButton>Slide Edge</ToolButton><ToolButton>Vertex</ToolButton></Pair>
                          {['Noise', 'Smooth Vertex', 'Randomize'].map(t => <ToolButton key={t}>{t}</ToolButton>)}
                        </Column>
                        <ShelfCaption>Add:</ShelfCaption>
                        <Column>
                          <Drop label="Extrude menu" text="Extrude" />
                          {['Extrude Region', 'Extrude Individual', 'Inset Faces', 'Make Edge/Face', 'Subdivide', 'Loop Cut and Slide', 'Offset Edge Slide', 'Duplicate'].map(t => <ToolButton key={t}>{t}</ToolButton>)}
                          <Pair><ToolButton>Spin</ToolButton><ToolButton>Screw</ToolButton></Pair>
                          <Pair><ToolButton>Knife</ToolButton><ToolButton>Select</ToolButton></Pair>
                          <ToolButton>Knife Project</ToolButton>
                          <ToolButton>Bisect</ToolButton>
                        </Column>
                        <ShelfCaption>Remove:</ShelfCaption>
                        <Column>
                          <Drop label="Delete menu" text="Delete" />
                          <Drop label="Merge menu" text="Merge" />
                          <ToolButton>Remove Doubles</ToolButton>
                        </Column>
                      </Section>
                    </ShelfBody>
                    <Track><Thumb $top={-1} $size={77} /></Track>
                    <Spacer $w={4} />
                  </ShelfTop>
                  <Operator>
                    <Title text="(De)select All" open />
                    <OperatorCaption><OperatorLabel>Action</OperatorLabel>
                      <Group><DropBox><Select><option>Toggle</option></Select><Updown /></DropBox></Group>
                    </OperatorCaption>
                  </Operator>
                </ToolShelf>

                <Viewport>
                  <MainScene />
                  <Hud>User Ortho<br />Feet x 3</Hud>
                  <ObjectName $x={69}>(0) Cube</ObjectName>
                </Viewport>

                <Properties>
                  <PropScroll>
                    <Lens>
                      <Column $round><Num label="Lens:" value="35mm" /></Column>
                      <Caption $mt={3}>Lock to Object:</Caption>
                      <ObjectField $mt={2}><ObjectIcon /><input aria-label="Lock to Object" /><DropperIcon /></ObjectField>
                      <CheckRow mt={2} text="Lock to Cursor" />
                      <CheckRow mt={5} text="Lock Camera t..." />
                      <Caption>Clip:</Caption>
                      <Column $round><Num label="Start:" value={'3.94"'} /><Num label="End:" value="3281'" /></Column>
                      <Caption $mt={1} $off>Local Camera:</Caption>
                      <ObjectField $mt={0} $off><ObjectIcon /><input aria-label="Local Camera" defaultValue="Camera" /><CrossIcon s={12} /></ObjectField>
                      <CheckRow mt={5} text="Render Border" />
                    </Lens>
                    <Section>
                      <Title text="3D Cursor" open />
                      <Caption $mt={11}>Location:</Caption>
                      <Column $round><Num label="X:" value="0'" /><Num label="Y:" value="0'" /><Num label="Z:" value="0'" /></Column>
                    </Section>
                    <Section>
                      <Title text="Item" open />
                      <Inline $mt={9}><IconCell><ObjectIcon s={14} /></IconCell><NameField><TextInput defaultValue="Cube" aria-label="Object name" /></NameField></Inline>
                    </Section>
                    <Section $pb={0}><Title text="Display" /></Section>
                    <Section $pb={0}><Title text="Shading" /></Section>
                    <Section $pb={0}><Title text="Motion Tracking" check on /></Section>
                    <Section $pb={5}>
                      <Title text="Mesh Display" open />
                      <Caption $mt={11}>Overlays:</Caption>
                      <Checks>
                        <CheckRow tall on text="Face" /><CheckRow tall text="Shar" />
                        <CheckRow tall on text="Edge" /><CheckRow tall text="Beve" />
                        <CheckRow tall on text="Crea" /><CheckRow tall text="Edge" />
                        <CheckRow tall text="Sea" /><CheckRow tall text="Face" />
                      </Checks>
                      <CheckRow mt={4} text="Show Weights" />
                      <Caption $mt={14}>Normals:</Caption>
                      <Inline $mt={2}>
                        <Group $flex>
                          <IconButton aria-label="Vertex normals"><NVertexIcon /></IconButton>
                          <IconButton aria-label="Split normals"><NSplitIcon /></IconButton>
                          <IconButton aria-label="Face normals"><FaceIcon /></IconButton>
                          <FadedNum><Side /><NumInput defaultValue={'3.5"'} aria-label="Normal size" disabled /><Side right /></FadedNum>
                        </Group>
                      </Inline>
                      <Captions><Caption $mt={0}>Edge Info</Caption><Caption $mt={0}>Face Info</Caption></Captions>
                      <Checks>
                        <CheckRow tall on text="Leng" /><CheckRow tall text="Area" />
                        <CheckRow tall text="Angl" /><CheckRow tall text="Angl" />
                      </Checks>
                    </Section>
                    <Section>
                      <Title text="Mesh Analysis" open check />
                      <Inline $mt={9} $off><TypeCaption>Type:</TypeCaption><Group $flex><Drop label="Analysis type" text="Overhang" /></Group></Inline>
                      <Inline $mt={4} $off><Group $round $flex><Num value="0°" name="Minimum" /><Num value="45°" name="Maximum" /></Group></Inline>
                    </Section>
                  </PropScroll>
                  <Track><Thumb $top={254} $size={63} /></Track>
                  <Corner at="tr" />
                </Properties>
              </Row>
              <ViewHeader full line />
            </Col>

            <SideViews>
              <Sliver><SliverScene /><Corner at="tr" /></Sliver>
              <ViewHeader line />
              <Viewport>
                <SideScene />
                <Hud>User Ortho<br />Feet</Hud>
                <Expander aria-label="Show tool shelf" />
                <Expander aria-label="Show properties" $right />
                <ObjectName $x={71}>(0) Cube</ObjectName>
                <Corner at="tr" />
              </Viewport>
              <ViewHeader line />
            </SideViews>
          </Row>

          <Timeline>
            <Ticks>{Array.from({ length: 21 }, (_, i) => <Tick key={i} />)}</Ticks>
            <Ruler>
              <RulerTrack><RulerRange><Handle /></RulerRange></RulerTrack>
              <RulerLabels>{Array.from({ length: 21 }, (_, i) => <span key={i}>{5 * i + 5}</span>)}</RulerLabels>
            </Ruler>
            <TimelineBar>
              <Corner at="bl" />
              <IconDrop label="Editor type" icon={<ClockIcon />} />
              <Menus>{['View', 'Marker', 'Frame', 'Playback'].map(m => <MenuButton key={m}>{m}</MenuButton>)}</Menus>
              <Group>
                <IconButton aria-label="Use preview range"><PieIcon /></IconButton>
                <IconButton aria-label="Lock time cursor"><LockIcon /></IconButton>
              </Group>
              <Group $round><Num label="Start:" value="0" w={115} /><Num label="End:" value="250" w={112} /></Group>
              <Group $round><Num value="0" name="Current frame" w={88} /></Group>
              <Spacer $w={5} />
              <Group>{PLAY.map(([n, d]) => <IconButton key={n} aria-label={n}><Play d={d} /></IconButton>)}</Group>
              <Group><Drop label="Sync" text="No Sync" w={113} /></Group>
              <Spacer $w={6} />
              <Group><IconButton aria-label="Record"><RecordIcon /></IconButton></Group>
              <IconDrop label="Keyframe type" icon={<KeyTypeIcon />} />
              <Group>
                <KeySet><KeySetIcon /><input aria-label="Keying set" /></KeySet>
                <IconButton aria-label="Insert keyframe"><KeyIcon /></IconButton>
                <IconButton aria-label="Delete keyframe"><KeyIcon off /></IconButton>
              </Group>
            </TimelineBar>
          </Timeline>
        </Col>

        <Sidebar>
          <Header>
            <IconDrop label="Editor type" icon={<TreeIcon />} />
            <Menus><MenuButton>View</MenuButton><MenuButton>Search</MenuButton></Menus>
            <Group><Drop label="Display mode" text="All Scenes" w={100} /></Group>
            <Corner at="tr" />
          </Header>
          <Outliner>
            <TreeRow>
              <TreeItem>
                <svg width="24" height="10" viewBox="0 0 24 10" aria-hidden="true"><circle cx="5" cy="5" r="4" fill="#eee" stroke="#111" strokeWidth="1.400" /><path d="M3 5h4" stroke="#111" strokeWidth="1.400" /><path d="M9.500 5H24" stroke="#444" /></svg>
                <IconHalo><SceneIcon /></IconHalo>Scene
              </TreeItem>
              <TreeCell /><TreeCell /><TreeCell />
              <Radio type="radio" aria-label="Active scene" />
            </TreeRow>
            <HTrack><HThumb /></HTrack>
            <Corner at="bl" />
          </Outliner>
          <Header>
            <IconDrop label="Editor type" icon={<PropsIcon />} />
            <PropTabs>
              <IconButton $tone="dark" aria-label="Render"><CameraIcon dim /></IconButton>
              <IconButton $tone="dark" aria-label="Render layers"><LayersIcon /></IconButton>
              <IconButton $tone="dark" aria-label="Scene"><Faded><SceneIcon /></Faded></IconButton>
              <IconButton $tone="dark" aria-label="World"><WorldIcon /></IconButton>
              <IconButton $tone="dark" aria-label="Object"><Faded><ObjectIcon s={14} /></Faded></IconButton>
              <IconButton $tone="dark" aria-label="Constraints"><LinkIcon /></IconButton>
              <IconButton $tone="blue" aria-label="Modifiers"><WrenchIcon /></IconButton>
            </PropTabs>
            <Corner at="tr" />
          </Header>
          <Crumbs>
            <PinIcon /><SceneIcon />
            <svg width="5" height="7" viewBox="0 0 5 7" aria-hidden="true"><path d="M0 0l4 3.500L0 7z" fill="#333" /></svg>
            <CrumbObject><ObjectIcon />Cube</CrumbObject>
          </Crumbs>
          <Modifier><Group><Drop label="Add modifier" text="Add Modifier" /></Group></Modifier>
        </Sidebar>
      </Row>
    </Page>
  );
}
